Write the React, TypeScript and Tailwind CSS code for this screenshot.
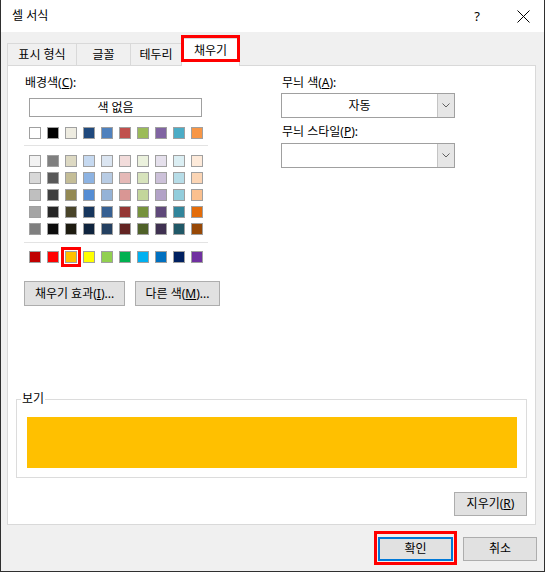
import React from 'react';

const themeRow = ['#FFFFFF', '#000000', '#EEECE1', '#1F497D', '#4F81BD', '#C0504D', '#9BBB59', '#8064A2', '#4BACC6', '#F79646'];

const tintRows = [
    ['#F2F2F2', '#7F7F7F', '#DDD9C3', '#C6D9F0', '#DBE5F1', '#F2DCDB', '#EBF1DD', '#E5E0EC', '#DBEEF3', '#FDEADA'],
    ['#D8D8D8', '#595959', '#C4BD97', '#8DB3E2', '#B8CCE4', '#E5B9B7', '#D7E3BC', '#CCC1D9', '#B7DDE8', '#FBD5B5'],
    ['#BFBFBF', '#3F3F3F', '#938953', '#548DD4', '#95B3D7', '#D99694', '#C3D69B', '#B2A2C7', '#92CDDC', '#FAC08F'],
    ['#A5A5A5', '#262626', '#494429', '#17365D', '#366092', '#953734', '#76923C', '#5F497A', '#31859B', '#E36C09'],
    ['#7F7F7F', '#0C0C0C', '#1D1B10', '#0F243E', '#244061', '#632423', '#4F6128', '#3F3151', '#205867', '#974806'],
];

const standardRow = ['#C00000', '#FF0000', '#FFC000', '#FFFF00', '#92D050', '#00B050', '#00B0F0', '#0070C0', '#002060', '#7030A0'];

const Swatch: React.FC<{ color: string; selected?: boolean }> = ({ color, selected }) => (
    <div className="relative w-[12px] h-[12px] border border-[#a0a0a0]" style={{ backgroundColor: color }}>
        {selected && <div className="absolute -inset-[5px] border-[3px] border-[#ff0000]" />}
    </div>
);

const SwatchRow: React.FC<{ colors: string[]; selectedIndex?: number }> = ({ colors, selectedIndex }) => (
    <div className="flex gap-[6px] pl-[5px]">
        {colors.map((c, i) => <Swatch key={i} color={c} selected={i === selectedIndex} />)}
    </div>
);

const Dropdown: React.FC<{ value?: string }> = ({ value }) => (
    <div className="flex h-[25px] w-[174px] border border-[#a0a0a0] bg-white">
        <div className="flex-1 flex items-center justify-center">{value}</div>
        <div className="w-[17px] border-l border-[#c4c4c4] bg-[#e6e6e6] flex items-center justify-center">
            <svg width="8" height="5" viewBox="0 0 8 5">
                <path d="M0.5 0.5 L4 4 L7.5 0.5" stroke="#606060" strokeWidth="1" fill="none" />
            </svg>
        </div>
    </div>
);

const App: React.FC = () => {
    return (
        <div className="w-[545px] h-[572px] flex flex-col border-x border-b border-[#2f2f2f] bg-[#f0f0f0] text-[12px] leading-[16px] text-black font-['Noto_Sans','Noto_Sans_CJK_KR',sans-serif]">
            {/* title bar */}
            <div className="h-[32px] shrink-0 bg-white flex items-center pl-[11px] pr-[14px]">
                <span>셀 서식</span>
                <span className="ml-auto text-[13px]">?</span>
                <svg className="ml-[37px]" width="13" height="13" viewBox="0 0 13 13">
                    <path d="M0.5 0.5 L12.5 12.5 M12.5 0.5 L0.5 12.5" stroke="#000" strokeWidth="1" />
                </svg>
            </div>

            {/* tabs */}
            <div className="h-[33px] shrink-0 flex items-end pl-[6px]">
                <div className="w-[69px] h-[22px] border-l border-t border-[#d9d9d9] flex items-center justify-center">표시 형식</div>
                <div className="w-[54px] h-[22px] border-l border-t border-[#d9d9d9] flex items-center justify-center">글꼴</div>
                <div className="w-[51px] h-[22px] border-l border-t border-[#d9d9d9] flex items-center justify-center">테두리</div>
                <div className="relative z-10 w-[59px] h-[28px] -mb-px bg-white border-l border-t border-r border-[#d9d9d9] flex items-center justify-center pb-[4px]">
                    채우기
                    <div className="absolute -left-px -right-px -top-[4px] bottom-[4px] border-[3px] border-[#ff0000]" />
                </div>
            </div>

            {/* panel */}
            <div className="ml-[6px] w-[529px] h-[460px] shrink-0 border border-[#d9d9d9] bg-white flex flex-col">
                <div className="flex pl-[16px] pt-[9px]">
                    <div className="w-[184px] shrink-0 flex flex-col">
                        <div className="pl-[1px]">배경색(<u>C</u>):</div>
                        <div className="mt-[7px] ml-[5px] w-[173px] h-[19px] border border-[#a0a0a0] flex items-center justify-center">색 없음</div>
                        <div className="mt-[10px]">
                            <SwatchRow colors={themeRow} />
                        </div>
                        <div className="mt-[6px] h-px bg-[#e3e3e3]" />
                        <div className="mt-[9px] flex flex-col gap-[5px]">
                            {tintRows.map((row, i) => <SwatchRow key={i} colors={row} />)}
                        </div>
                        <div className="mt-[7px] h-px bg-[#e3e3e3]" />
                        <div className="mt-[8px]">
                            <SwatchRow colors={standardRow} selectedIndex={2} />
                        </div>
                        <div className="mt-[18px] flex gap-[10px]">
                            <button className="shrink-0 w-[101px] h-[25px] border border-[#adadad] bg-[#e1e1e1]">채우기 효과(<u>I</u>)...</button>
                            <button className="shrink-0 w-[85px] h-[25px] border border-[#adadad] bg-[#e1e1e1]">다른 색(<u>M</u>)...</button>
                        </div>
                    </div>

                    <div className="ml-[73px] flex flex-col">
                        <div className="pl-[1px]">무늬 색(<u>A</u>):</div>
                        <div className="mt-[2px]">
                            <Dropdown value="자동" />
                        </div>
                        <div className="mt-[6px] pl-[1px]">무늬 스타일(<u>P</u>):</div>
                        <div className="mt-[3px]">
                            <Dropdown />
                        </div>
                    </div>
                </div>

                <fieldset className="mt-[85px] mx-[8px] border border-[#dcdcdc]">
                    <legend className="ml-[4px] px-[1px]">보기</legend>
                    <div className="mt-[10px] mb-[9px] ml-[10px] mr-[9px] h-[51px] bg-[#FFC000]" />
                </fieldset>

                <div className="mt-[14px] mr-[8px] self-end">
                    <button className="w-[73px] h-[24px] border border-[#adadad] bg-[#e1e1e1]">지우기(<u>R</u>)</button>
                </div>
            </div>

            {/* dialog buttons */}
            <div className="mt-[12px] pr-[7px] flex justify-end gap-[10px]">
                <div className="relative">
                    <button className="w-[75px] h-[24px] border-2 border-[#0078d7] bg-[#e1e1e1]">확인</button>
                    <div className="absolute -left-[4px] -right-[4px] -top-[6px] -bottom-[4px] border-[3px] border-[#ff0000]" />
                </div>
                <button className="w-[74px] h-[24px] border border-[#adadad] bg-[#e1e1e1]">취소</button>
            </div>
        </div>
    );
};

export default App;
